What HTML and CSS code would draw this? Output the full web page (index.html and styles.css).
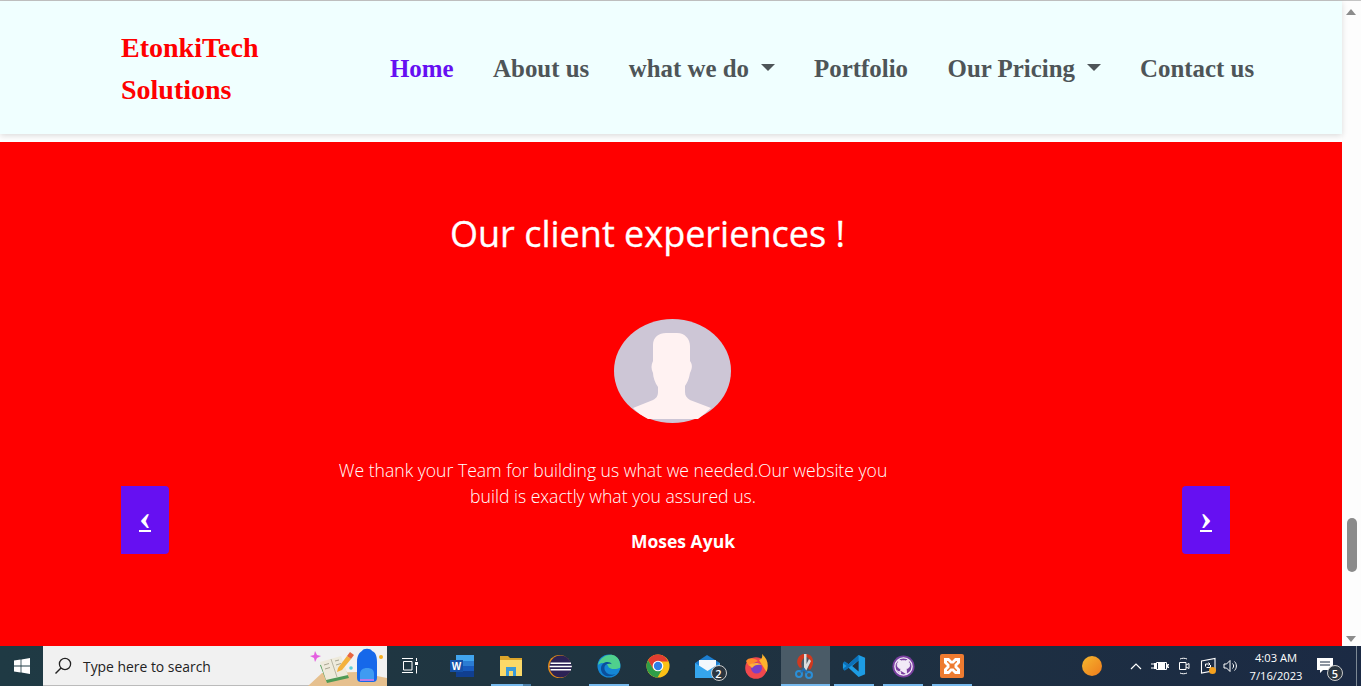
FILE: index.html
```html
<!DOCTYPE html>
<html lang="en">
<head>
    <meta charset="UTF-8">
    <title>EtonkiTech Solutions</title>
    <link rel="stylesheet" href="styles.css">
</head>
<body>
    <div class="window">
        <div class="page">
            <nav class="navbar">
                <a class="brand">EtonkiTech Solutions</a>
                <ul class="nav-links">
                    <li class="active">Home</li>
                    <li>About us</li>
                    <li class="dropdown">what we do</li>
                    <li>Portfolio</li>
                    <li class="dropdown">Our Pricing</li>
                    <li>Contact us</li>
                </ul>
            </nav>

            <!-- Testimonials -->
            <section class="clients">
                <h2>Our client experiences !</h2>
                <div class="avatar">
                    <svg viewBox="0 0 117 104" width="117" height="104">
                        <ellipse cx="58.5" cy="52" rx="58.5" ry="52" fill="#cdc6d6"/>
                        <path d="M19 89 L39 81 C43 79 44 76 44 73 L44 68 C41 64 39 58 39 54 C37 50 37 46 39 42 L39 26 C39 18 45 14 52 14 L63 14 C71 14 76 20 76 27 L76 42 C79 46 78 50 76 54 C75 60 73 64 71 67 L71 73 C71 77 73 79 76 81 L97 89 C93 93 89 96 84 100 L34 100 C28 97 23 93 19 89 Z" fill="#fff2f2"/>
                    </svg>
                </div>
                <p class="quote">We thank your Team for building us what we needed.Our website you build is exactly what you assured us.</p>
                <p class="client-name">Moses Ayuk</p>
                <a class="control prev">&#x2039;</a>
                <a class="control next">&#x203A;</a>
            </section>
        </div>

        <div class="scrollbar">
            <span class="arrow up"></span>
            <div class="track"><span class="thumb"></span></div>
            <span class="arrow down"></span>
        </div>
    </div>

    <footer class="taskbar">
        <div class="start">
            <svg viewBox="0 0 16 16" width="16" height="16"><path d="M0 2.4 6.6 1.5V7.6H0ZM7.4 1.4 16 0V7.6H7.4ZM0 8.4H6.6V14.5L0 13.6ZM7.4 8.4H16V16L7.4 14.6Z" fill="#fff"/></svg>
        </div>
        <div class="search">
            <svg viewBox="0 0 18 18" width="18" height="18"><circle cx="11" cy="7" r="5.6" fill="none" stroke="#222" stroke-width="1.3"/><path d="M7 11 1.5 16.5" stroke="#222" stroke-width="1.5"/></svg>
            <span>Type here to search</span>
            <svg class="search-art" viewBox="0 0 80 40" width="80" height="40">
                <path d="M1 40 15 27 50 26 80 32V40Z" fill="#e6c08e"/>
                <path d="M13 19 34 13 42 32 20 37Z" fill="#4f9a55"/>
                <path d="M13 16 34 10 41 29 19 34Z" fill="#eeeadb"/>
                <path d="M24 13 30 31" stroke="#b9b6a4" fill="none"/>
                <path d="M17 19 22 17.5M18 23 23 21.5M28 15 32 14M29 19 34 17.5" stroke="#a9a692" fill="none"/>
                <path d="M31 22 40 10 44 13 35 24 30 26Z" fill="#f4b13c"/>
                <path d="M40 10 43 6 47 9 44 13Z" fill="#e8653f"/>
                <path d="M50 32V16C50 9 53 6 55 5 56 2 64 2 65 5 68 6 70 9 70 16V32C70 35 68 36 66 36H54C52 36 50 35 50 32Z" fill="#1668ea"/>
                <path d="M53 35V28C53 24 56 22 60 22 65 22 67 24 67 28V35Z" fill="#3f9bf2"/>
                <path d="M53 33H67V35H53Z" fill="#b67bea"/>
                <path d="M8 5 10 9 14 10 10 12 8 16 7 12 3 10 7 9Z" fill="#e45ee0"/>
                <circle cx="74" cy="11" r="2" fill="#f6ad1d"/>
                <circle cx="44" cy="22" r="1.8" fill="#58cfd8"/>
            </svg>
        </div>
        <div class="apps">
            <div class="app task-view">
                <svg viewBox="0 0 16 16" width="16" height="16"><path d="M0 .5H11M1.5 3.5H10V12H1.5ZM0 14.5H11M14.5 0V3M14.5 8V15.5" fill="none" stroke="#fff"/><path d="M13 4H16V7H13Z" fill="#fff"/></svg>
            </div>
            <div class="app">
                <svg viewBox="0 0 24 22" width="24" height="22">
                    <path d="M6 0H24V22H6Z" fill="#185abd"/>
                    <path d="M6 0H24V6H6Z" fill="#41a5ee"/>
                    <path d="M6 6H24V11H6Z" fill="#2b7cd3"/>
                    <path d="M6 16H24V22H6Z" fill="#103f91"/>
                    <path d="M0 5H13V17H0Z" fill="#1450a8"/>
                    <text x="6.5" y="15" class="word-letter">W</text>
                </svg>
            </div>
            <div class="app running split">
                <svg viewBox="0 0 22 20" width="22" height="20">
                    <path d="M0 0H8L10 2H22V20H0Z" fill="#dca52a"/>
                    <path d="M0 4H22V20H0Z" fill="#fbd968"/>
                    <path d="M6 11H16V20H13V15H9V20H6Z" fill="#3b9ad8"/>
                </svg>
            </div>
            <div class="app">
                <svg viewBox="0 0 24 23" width="24" height="23">
                    <ellipse cx="11.5" cy="11.5" rx="11.5" ry="11.5" fill="#e78c18"/>
                    <circle cx="12.5" cy="11.5" r="11" fill="#2c2255"/>
                    <path d="M2.5 7.5H23V9H2.5ZM1.5 10.8H23.8V12.2H1.5ZM2.5 14H23V15.5H2.5Z" fill="#fff"/>
                </svg>
            </div>
            <div class="app running">
                <svg viewBox="0 0 26 26" width="24" height="24">
                    <circle cx="13" cy="13" r="12.5" fill="#1487d6"/>
                    <path d="M1 12C3 3 12 0 17 1 23 2 26 9 25 15 21 17 13 17 12 13 11 10 5 8 1 12Z" fill="#4fd08d"/>
                    <path d="M8 15C8 20 13 24 20 22 16 25 9 25 6 21 3 17 4 11 9 9 12 8 15 9 16 11 12 10 8 11 8 15Z" fill="#0b4f9c"/>
                </svg>
            </div>
            <div class="app">
                <svg viewBox="0 0 26 26" width="24" height="24">
                    <circle cx="13" cy="13" r="12.5" fill="#fbc116"/>
                    <path d="M13 .5A12.5 12.5 0 0 0 2.2 6.8L8 16.5 13 8H24A12.5 12.5 0 0 0 13 .5Z" fill="#e23d30"/>
                    <path d="M2.2 6.8A12.5 12.5 0 0 0 12.5 25.5L17.5 16.5 13 18.5C10 18.5 8.8 17 8 16.5Z" fill="#2f9e48"/>
                    <circle cx="13" cy="13" r="5.8" fill="#fff"/>
                    <circle cx="13" cy="13" r="4.5" fill="#2f7fe6"/>
                </svg>
            </div>
            <div class="app">
                <svg viewBox="0 0 25 23" width="25" height="23">
                    <path d="M0 8 12 0 25 8V23H0Z" fill="#1c7ed0"/>
                    <path d="M4 5H21V13L12 17 4 13Z" fill="#f3f8fc"/>
                    <path d="M0 8 12.5 16 25 8V23H0Z" fill="#35a6ee"/>
                </svg>
                <span class="badge small">2</span>
            </div>
            <div class="app">
                <svg viewBox="0 0 24 25" width="24" height="25">
                    <circle cx="12" cy="14" r="10.8" fill="#f0484e"/>
                    <path d="M18 0C24 5 25 12 22.5 18L15 6C17 5 19 4 18 0Z" fill="#fcb32c"/>
                    <path d="M2 7C5 3 10 4 14 7L10 9 5 12C4 11 3 9 2 7Z" fill="#ff8a2b"/>
                    <circle cx="12.5" cy="14" r="5.5" fill="#7b3fc8"/>
                    <path d="M5 11C8 9 14 8 18 11 14 10 10 11 8 14Z" fill="#ffb03a"/>
                </svg>
            </div>
            <div class="app current">
                <svg viewBox="0 0 22 26" width="22" height="26">
                    <path d="M6 15C1 10 3 3 9 1H13C20 2 21 11 16 17L14 15C17 11 16 6 13 4 9 4 6 9 8 14Z" fill="#d0391f"/>
                    <path d="M10 1 12.5 1 12.5 15 10 15ZM15 6 17 8 12 18 10 16Z" fill="#dcdcdc"/>
                    <circle cx="5" cy="21" r="3" fill="none" stroke="#2a8fd8" stroke-width="2"/>
                    <circle cx="15" cy="22" r="3" fill="none" stroke="#2a8fd8" stroke-width="2"/>
                    <path d="M7 19 10 16 13 20" fill="none" stroke="#1f6fb5" stroke-width="2"/>
                </svg>
            </div>
            <div class="app running">
                <svg viewBox="0 0 26 26" width="24" height="24">
                    <path d="M18 1 25 4V22L18 25 7 15 3 18 1 16V10L3 8 7 11ZM18 7 11 13 18 19Z" fill="#1d9ce4"/>
                    <path d="M18 1 7 11 3 8 1 10 5 13 1 16 3 18 18 7Z" fill="#0b6fb8"/>
                </svg>
            </div>
            <div class="app running">
                <svg viewBox="0 0 24 24" width="23" height="23">
                    <circle cx="12" cy="12" r="11.5" fill="#7a3fa0"/>
                    <circle cx="12" cy="12" r="9" fill="#7a3fa0" stroke="#f2e9f7" stroke-width="1.4"/>
                    <path d="M9 20V17.5C6 18 5 16 4.5 15.5M15 20V16.5C15 15.5 15 15 14.5 14.5 17 14 18.5 13 18.5 10 18.5 9 18 8 17.5 7.5 17.7 6.5 17.6 5.8 17.3 5 16.5 5 15.5 5.5 14.5 6.2 13 5.8 11 5.8 9.5 6.2 8.5 5.5 7.5 5 6.7 5 6.4 5.8 6.3 6.5 6.5 7.5 6 8 5.5 9 5.5 10 5.5 13 7 14 9.5 14.5 9 15 9 15.5 9 16.5" fill="#f2e9f7" stroke="#f2e9f7" stroke-width="1"/>
                </svg>
            </div>
            <div class="app running">
                <svg viewBox="0 0 24 24" width="24" height="24">
                    <rect width="24" height="24" rx="2" fill="#ee7b30"/>
                    <path d="M4 4H9L12 7 15 4H20V9L17 12 20 15V20H15L12 17 9 20H4V15L7 12 4 9Z" fill="#fff"/>
                    <path d="M7 7H8L10.5 9.5H13.5L16 7H17V8L14.5 10.5V13.5L17 16V17H16L13.5 14.5H10.5L8 17H7V16L9.5 13.5V10.5L7 8Z" fill="#ee7b30"/>
                </svg>
            </div>
        </div>
        <div class="tray">
            <span class="orb"></span>
            <svg viewBox="0 0 12 7" width="12" height="7"><path d="M1 6 6 1 11 6" fill="none" stroke="#fff" stroke-width="1.2"/></svg>
            <svg viewBox="0 0 18 12" width="18" height="12"><path d="M5.5 2.5H15.5V9.5H5.5ZM16.5 4.5H18V7.5H16.5Z" fill="none" stroke="#fff"/><path d="M7 3H14V9H7ZM3 3H5V9H3ZM0 3.5H3V4.5H0ZM0 7.5H3V8.5H0Z" fill="#fff"/></svg>
            <svg viewBox="0 0 12 18" width="12" height="18"><path d="M1.5 5.5H8V12.5H1.5ZM8 8 11 6.5V11.5L8 10M2 2C4 1 7 1 9 2M2 16C4 17 7 17 9 16" fill="none" stroke="#fff"/></svg>
            <span class="net">
                <svg viewBox="0 0 18 18" width="18" height="18"><path d="M2.5 4 16 1.5V13.5L2.5 16Z" fill="none" stroke="#fff" stroke-width="1.1"/><path d="M6.5 9.5V7H11M9.5 5.5 11 7 9.5 8.5M11.5 8V10.5H7.5" fill="none" stroke="#fff"/></svg>
                <i></i>
            </span>
            <svg class="sound" viewBox="0 0 16 14" width="16" height="14"><path d="M1 5H3.5L7 1.5V12.5L3.5 9H1ZM9.5 4.5C11 6 11 8 9.5 9.5M11.5 2.5C14 5 14 9 11.5 11.5" fill="none" stroke="#fff"/></svg>
            <div class="clock"><span>4:03 AM</span><span>7/16/2023</span></div>
            <div class="notify">
                <svg viewBox="0 0 18 16" width="18" height="16"><path d="M0 0H16V12H6L3 15V12H0Z" fill="#fff"/><path d="M3 4H13M3 7H13" stroke="#1b2a40"/></svg>
                <span class="badge">5</span>
            </div>
            <span class="show-desktop"></span>
        </div>
    </footer>
</body>
</html>
```

FILE: styles.css
```css
* {
    box-sizing: border-box;
}
html, body {
    margin: 0;
    padding: 0;
    height: 686px;
    overflow: hidden;
}
body {
    font-family: "Liberation Serif", serif;
    background: #fff;
}
.window {
    display: flex;
    height: 646px;
    border-top: 1px solid #c4c4c4;
}
.page {
    flex: 1;
    min-width: 0;
    background: #fff;
}

/* nav */
.navbar {
    display: flex;
    align-items: center;
    height: 133px;
    padding-left: 121px;
    background: #f0ffff;
    box-shadow: 0 2px 6px rgba(0, 0, 0, 0.14);
    position: relative;
    z-index: 1;
}
.brand {
    width: 150px;
    margin-top: 3px;
    font-size: 28px;
    font-weight: bold;
    line-height: 42px;
    color: #f00;
}
.nav-links {
    display: flex;
    gap: 39.5px;
    list-style: none;
    margin: 2px 0 0 119px;
    padding: 0;
    font-size: 24.9px;
    font-weight: bold;
    color: #4e5558;
    white-space: nowrap;
}
.nav-links .active {
    color: #6610f2;
}
.dropdown::after {
    content: "";
    display: inline-block;
    margin-left: 11.5px;
    vertical-align: 6px;
    border-top: 7px solid #4e5558;
    border-left: 7px solid transparent;
    border-right: 7px solid transparent;
}

/* testimonials */
.clients {
    position: relative;
    height: 504px;
    margin-top: 8px;
    padding-top: 66px;
    background: #f00;
    color: #fff;
}
.clients h2 {
    margin: 0;
    padding-right: 47px;
    text-align: center;
    font-family: "Open Sans", sans-serif;
    font-size: 36px;
    font-weight: 500;
    line-height: 52px;
    -webkit-text-stroke: 0.3px #fff;
}
.avatar {
    display: flex;
    justify-content: center;
    margin-top: 59px;
    padding-left: 3px;
}
.avatar svg {
    display: block;
}
.quote {
    width: 560px;
    margin: 34px 0 0 333px;
    text-align: center;
    font-family: "Open Sans", sans-serif;
    font-size: 17.6px;
    font-weight: 300;
    line-height: 26px;
}
.client-name {
    margin: 19px 0 0;
    padding-left: 24px;
    text-align: center;
    font-family: "Open Sans", sans-serif;
    font-size: 17.5px;
    font-weight: 700;
    line-height: 26px;
}
.control {
    position: absolute;
    top: 344px;
    width: 48px;
    height: 68px;
    background: #6610f2;
    text-align: center;
    font-family: "Liberation Serif", serif;
    font-size: 36px;
    font-weight: bold;
    line-height: 63px;
    text-decoration: underline;
    text-decoration-thickness: 2px;
    color: #fff;
}
.prev {
    left: 121px;
    border-radius: 0 4px 4px 0;
}
.next {
    left: 1182px;
    border-radius: 4px 0 0 4px;
}

/* scrollbar */
.scrollbar {
    display: flex;
    flex-direction: column;
    width: 19px;
    background: #fdfdfd;
}
.arrow {
    flex: none;
    width: 0;
    height: 0;
    margin: 8px 0 0 4px;
    border-left: 5.5px solid transparent;
    border-right: 5.5px solid transparent;
}
.arrow.up {
    border-bottom: 6px solid #8c8c8c;
}
.arrow.down {
    margin: 0 0 4px 4px;
    border-top: 6px solid #8c8c8c;
}
.track {
    flex: 1;
    padding: 503px 0 0 5px;
}
.thumb {
    display: block;
    width: 10px;
    height: 54px;
    border-radius: 5px;
    background: #8b8b8b;
}

/* taskbar */
.taskbar {
    display: flex;
    height: 40px;
    background: linear-gradient(90deg, #1f3a44, #1f3340 50%, #1b2a44);
    color: #fff;
    font-family: "Open Sans", sans-serif;
}
.start {
    display: flex;
    align-items: center;
    justify-content: center;
    width: 43px;
}
.search {
    display: flex;
    align-items: center;
    position: relative;
    width: 344px;
    padding: 1px 0 0 11px;
    gap: 11px;
    background: #f1f1f1;
    border-bottom: 1px solid #bbb;
    font-size: 13.9px;
    color: #222;
}
.search-art {
    position: absolute;
    right: 0;
    bottom: -1px;
}
.apps {
    display: flex;
}
.app {
    display: flex;
    align-items: center;
    justify-content: center;
    position: relative;
    width: 49px;
    height: 40px;
}
.app.task-view {
    width: 50.5px;
    padding-right: 5px;
}
.app.running::after {
    content: "";
    position: absolute;
    left: 4.5px;
    right: 4.5px;
    bottom: 0;
    height: 2px;
    background: #76b9ed;
}
.app.split::after {
    background: linear-gradient(90deg, #76b9ed 80%, #4b7fa8 80%);
}
.app.current {
    background: #4a5b67;
    box-shadow: inset 0 -2px 0 #76b9ed;
}
.word-letter {
    font-family: "Liberation Sans", sans-serif;
    font-size: 10px;
    font-weight: bold;
    fill: #fff;
    text-anchor: middle;
}
.badge {
    position: absolute;
    display: flex;
    align-items: center;
    justify-content: center;
    width: 16px;
    height: 16px;
    border-radius: 50%;
    border: 1px solid #ccc;
    background: #2b3640;
    font-size: 11px;
    font-weight: 600;
    color: #fff;
}
.badge.small {
    left: 28px;
    top: 19px;
}
.tray {
    display: flex;
    align-items: center;
    flex: 1;
    gap: 9px;
    padding-left: 105.5px;
}
.orb {
    width: 20px;
    height: 20px;
    margin-right: 19px;
    border-radius: 50%;
    background: linear-gradient(135deg, #f5b82e, #ee7a1c);
}
.net {
    position: relative;
    display: flex;
}
.net i {
    position: absolute;
    right: 1.5px;
    bottom: 1.5px;
    width: 7px;
    height: 7px;
    border-radius: 50%;
    background: #f5a11e;
}
.sound {
    margin-left: -3px;
}
.clock {
    display: flex;
    flex-direction: column;
    align-items: center;
    width: 58px;
    margin: 2px 0 0 -1px;
    font-size: 11.2px;
    line-height: 18px;
}
.notify {
    position: relative;
    display: flex;
    margin-left: 3px;
}
.notify .badge {
    left: 10px;
    top: 7px;
}
.show-desktop {
    width: 1px;
    height: 40px;
    margin-left: 12px;
    background: #7c8894;
}
```
